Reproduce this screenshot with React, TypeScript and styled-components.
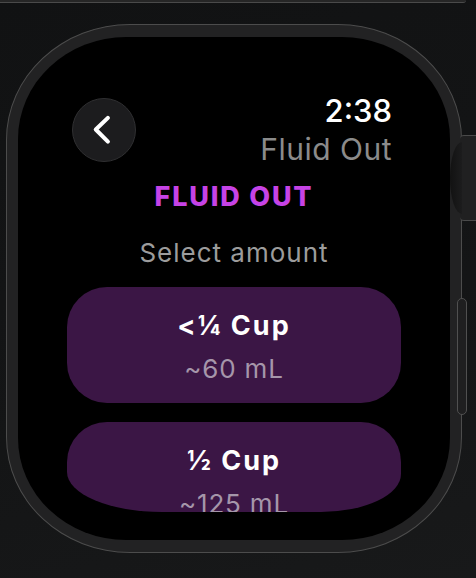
import React, {FC} from "react";
import styled, {createGlobalStyle} from "styled-components";

const GlobalStyle = createGlobalStyle`
  html, body {
    margin: 0;
    padding: 0;
    background: #131415;
  }

  body {
    font-family: Inter, "Noto Sans", "DejaVu Sans", sans-serif;
  }
`;

const Page = styled.div`
  position: relative;
  width: 476px;
  height: 578px;
  overflow: hidden;
  background: linear-gradient(160deg, #111213 0%, #141516 60%, #18191a 100%);
`;

const TopEdge = styled.div`
  box-sizing: border-box;
  width: 466px;
  height: 3px;
  background: #262626;
  border-bottom: 1px solid #4a4a4a;
  border-bottom-right-radius: 8px;
`;

const Case = styled.div`
  position: relative;
  box-sizing: border-box;
  width: 456px;
  height: 529px;
  margin: 21px 0 0 6px;
  padding: 12px 11px;
  border: 1px solid #4c4c4c;
  border-radius: 124px / 116px;
  background: #222223;
`;

const Crown = styled.div`
  position: absolute;
  left: 453px;
  top: 110px;
  width: 24px;
  height: 86px;
  box-sizing: border-box;
  border-top: 1px solid #4a4a4a;
  border-bottom: 1px solid #4a4a4a;
  border-radius: 4px 0 0 4px;
  background:
    repeating-linear-gradient(180deg, #6a6a6a 0 1px, transparent 1px 4px) right 0 top 3px / 4px 80px no-repeat,
    #202021;

  &::before {
    content: "";
    position: absolute;
    left: -10px;
    top: 6px;
    width: 12px;
    height: 72px;
    border-radius: 12px 0 0 12px / 36px 0 0 36px;
    background: linear-gradient(90deg, #121212 0%, #1c1c1d 100%);
  }
`;

const SideButton = styled.div`
  position: absolute;
  left: 450px;
  top: 273px;
  width: 10px;
  height: 117px;
  box-sizing: border-box;
  border: 1px solid #505050;
  border-radius: 5px;
  background: #1f1f20;
`;

const Screen = styled.div`
  box-sizing: border-box;
  height: 100%;
  border-radius: 108px / 102px;
  background: #000;
  overflow: hidden;
  display: flex;
  flex-direction: column;
  align-items: center;
`;

const Header = styled.div`
  box-sizing: border-box;
  width: 100%;
  margin-top: 57px;
  padding: 0 58px 0 54px;
  display: flex;
  justify-content: space-between;
  align-items: flex-start;
`;

const BackButton = styled.button`
  width: 64px;
  height: 64px;
  margin-top: 4px;
  padding: 0;
  border: 1px solid #303032;
  border-radius: 50%;
  background: #1c1c1e;
  display: flex;
  align-items: center;
  justify-content: center;
`;

const Status = styled.div`
  display: flex;
  flex-direction: column;
  align-items: flex-end;
`;

const Clock = styled.div`
  font-size: 31px;
  font-weight: 500;
  line-height: 34px;
  color: #fff;
`;

const ScreenName = styled.div`
  margin-top: 4px;
  font-size: 30px;
  line-height: 34px;
  letter-spacing: 0.5px;
  color: #8b8b8b;
`;

const Heading = styled.div`
  margin-top: 15px;
  font-size: 27px;
  font-weight: 800;
  line-height: 32px;
  letter-spacing: 1.8px;
  color: #c643e6;
`;

const Hint = styled.div`
  margin-top: 24px;
  font-size: 26px;
  line-height: 32px;
  letter-spacing: 1px;
  color: #9c9c9c;
`;

// list area; bottom corners curve in like the watch's edge fade
const List = styled.div`
  width: 334px;
  height: 225px;
  margin-top: 18px;
  overflow: hidden;
  border-bottom-left-radius: 95px 40px;
  border-bottom-right-radius: 80px 38px;
  display: flex;
  flex-direction: column;
  gap: 19px;
`;

const Amount = styled.div`
  flex-shrink: 0;
  box-sizing: border-box;
  height: 116px;
  padding-top: 24px;
  border-radius: 40px;
  background: #3b1645;
  text-align: center;
`;

const AmountLabel = styled.div`
  font-size: 27px;
  font-weight: 700;
  line-height: 30px;
  letter-spacing: 2px;
  color: #fff;
`;

const AmountVolume = styled.div`
  margin-top: 13px;
  font-size: 26px;
  line-height: 30px;
  letter-spacing: 0.8px;
  color: #a596aa;
`;

type AmountOption = {
    label: string;
    volume: string;
}

const options: AmountOption[] = [
    {label: "<¼ Cup", volume: "~60 mL"},
    {label: "½ Cup", volume: "~125 mL"},
];

const ChevronLeft: FC = () => (
    <svg width="64" height="64" viewBox="0 0 64 64" fill="none">
        <path d="M36 19.5 L23.5 31.5 L36 44" stroke="#fff" strokeWidth="4.2" strokeLinecap="round" strokeLinejoin="round"/>
    </svg>
);

const App: FC = () => {
    return (
        <Page>
            <GlobalStyle/>
            <TopEdge/>
            <Case>
                <Crown/>
                <SideButton/>
                <Screen>
                    <Header>
                        <BackButton aria-label="Back">
                            <ChevronLeft/>
                        </BackButton>
                        <Status>
                            <Clock>2:38</Clock>
                            <ScreenName>Fluid Out</ScreenName>
                        </Status>
                    </Header>
                    <Heading>FLUID OUT</Heading>
                    <Hint>Select amount</Hint>
                    <List>
                        {options.map(o => (
                            <Amount key={o.label}>
                                <AmountLabel>{o.label}</AmountLabel>
                                <AmountVolume>{o.volume}</AmountVolume>
                            </Amount>
                        ))}
                    </List>
                </Screen>
            </Case>
        </Page>
    );
}

export default App;
